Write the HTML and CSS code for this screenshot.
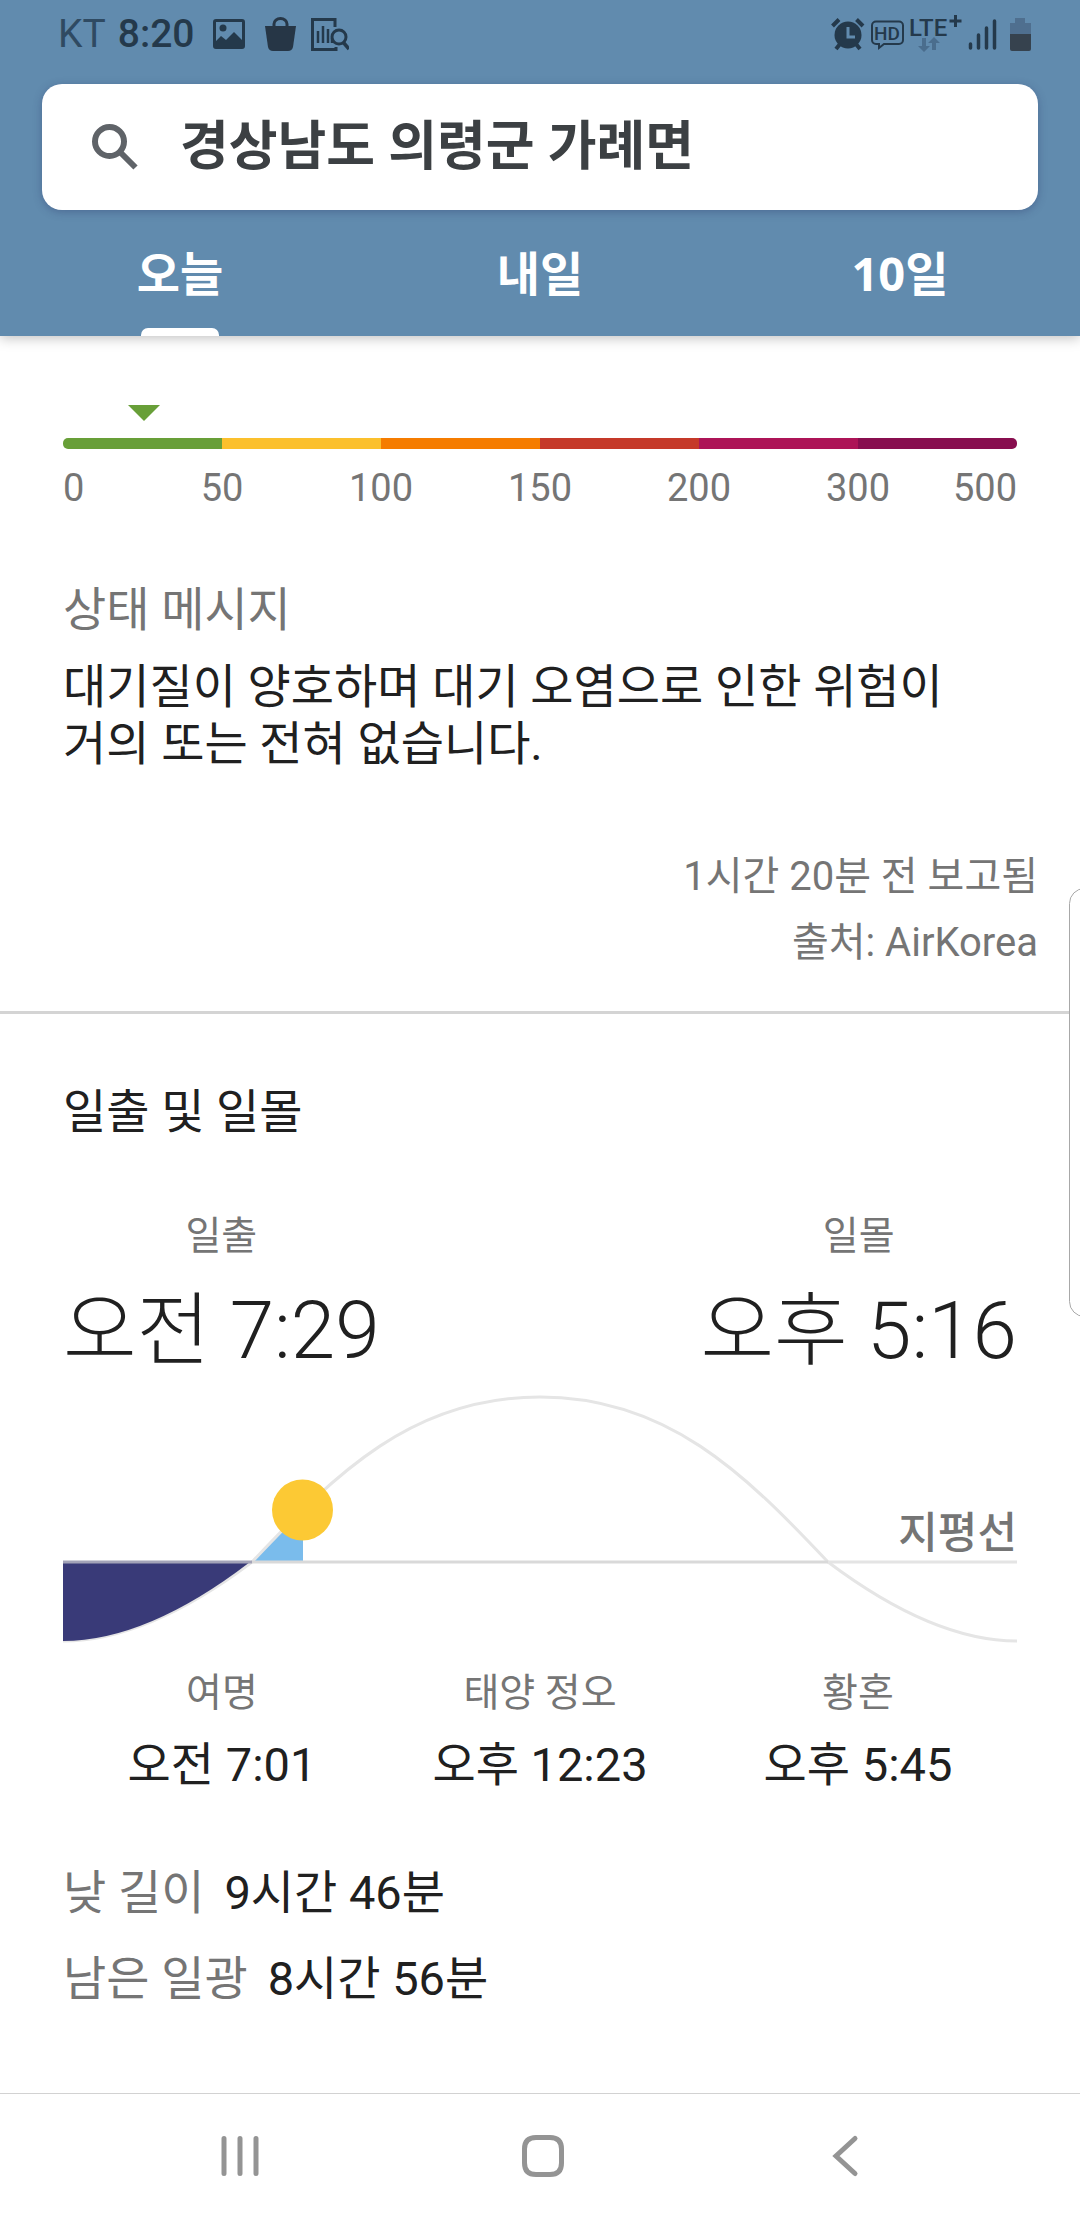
FILE: index.html
```html
<!DOCTYPE html>
<html lang="ko">
<head>
<meta charset="utf-8">
<meta name="viewport" content="width=device-width">
<title>날씨</title>
<link rel="stylesheet" href="styles.css">
</head>
<body>
<div class="app">
  <header class="header">
    <div class="status">
      <span class="carrier">KT</span>
      <span class="clock">8:20</span>
      <svg class="status-icon" width="32" height="34" viewBox="0 0 32 34" aria-hidden="true">
        <path fill="currentColor" fill-rule="evenodd" d="M3 2h26a3 3 0 0 1 3 3v24a3 3 0 0 1-3 3H3a3 3 0 0 1-3-3V5a3 3 0 0 1 3-3zm0 3v19l5-5 5 4 8-8 8 8V5z"/>
        <circle cx="10" cy="11" r="3.500" fill="currentColor"/>
      </svg>
      <svg class="status-icon bag" width="31" height="34" viewBox="0 0 31 34" aria-hidden="true">
        <path fill="currentColor" d="M0 9h31l-3 21q-1 4-5 4H8q-4 0-5-4z"/>
        <path fill="none" stroke="currentColor" stroke-width="3" d="M9 10V7a6.500 5.500 0 0 1 13 0v3"/>
      </svg>
      <svg class="status-icon chart" width="38" height="34" viewBox="0 0 38 34" aria-hidden="true">
        <g fill="none" stroke="currentColor" stroke-width="3">
          <path d="M24 10V2.500H1.500v30H25V30"/>
          <path stroke-width="2.500" d="M7 26V14M12 26V9M17 26V12M21 26v-5"/>
          <circle cx="28" cy="20" r="7"/>
          <path stroke-width="3.500" d="M32 25l6 7"/>
        </g>
      </svg>
      <svg class="status-icon system" width="202" height="42" viewBox="826 12 202 42" role="img" aria-label="알람, HD, LTE+, 신호, 배터리">
        <g fill="none" stroke="currentColor">
          <circle cx="846" cy="34" r="13.500" fill="currentColor" stroke="none"/>
          <path stroke-width="4" d="M830.500 25l6.500-6.500M861 25l-6.500-6.500M834 48l4-5M858 48l-4-5"/>
          <path stroke="#618bae" stroke-width="3" d="M846 26v10h7"/>
          <path stroke-width="2" d="M874 20.500h23a4 4 0 0 1 4 4V39a4 4 0 0 1-4 4H882l-5 4v-4h-3a4 4 0 0 1-4-4V24.500a4 4 0 0 1 4-4z"/>
          <path stroke-width="3.500" stroke-linecap="round" d="M968.500 47v-4M976.500 47V34M984.500 47V27M992.500 47V20"/>
        </g>
        <text class="hd" x="872" y="39">HD</text>
        <text class="lte" x="907" y="35">LTE</text>
        <path fill="none" stroke="currentColor" stroke-width="3" d="M953.500 14v12M947.500 20h12"/>
        <path fill="#4a6d8d" d="M920 37h4v8h4l-6 6-6-6h4zM930 49h4v-7h4l-6-6-6 6h4z"/>
        <path fill="#4f6f8f" d="M1013 17h10v5h6v11h-21V22h5z"/>
        <path fill="#36424e" d="M1008 33h21v15q0 2-2 2h-17q-2 0-2-2z"/>
      </svg>
    </div>
    <label class="search">
      <svg class="search-icon" width="46" height="46" viewBox="0 0 46 46" aria-hidden="true">
        <circle cx="17.500" cy="17.500" r="14.500"/>
        <path d="M28 28l15.500 15.500"/>
      </svg>
      <input class="search-input" type="text" value="경상남도 의령군 가례면" aria-label="위치 검색">
    </label>
    <nav class="tabs">
      <button class="tab tab-active" type="button">오늘</button>
      <button class="tab" type="button">내일</button>
      <button class="tab" type="button">10일</button>
    </nav>
  </header>

  <main class="content">
    <section class="air">
      <div class="scale">
        <div class="marker"></div>
        <div class="bar">
          <span class="seg seg-good"></span>
          <span class="seg seg-moderate"></span>
          <span class="seg seg-sensitive"></span>
          <span class="seg seg-unhealthy"></span>
          <span class="seg seg-very"></span>
          <span class="seg seg-hazard"></span>
        </div>
        <div class="ticks">
          <span class="tick tick-first">0</span>
          <span class="tick">50</span>
          <span class="tick">100</span>
          <span class="tick">150</span>
          <span class="tick">200</span>
          <span class="tick">300</span>
          <span class="tick tick-last">500</span>
        </div>
      </div>
      <h2 class="caption">상태 메시지</h2>
      <p class="message">대기질이 양호하며 대기 오염으로 인한 위험이 거의 또는 전혀 없습니다.</p>
      <div class="source">
        <p>1시간 20분 전 보고됨</p>
        <p>출처: AirKorea</p>
      </div>
    </section>

    <section class="sun">
      <h2 class="title">일출 및 일몰</h2>
      <dl class="main-times">
        <div class="time">
          <dt>일출</dt>
          <dd>오전 7:29</dd>
        </div>
        <div class="time">
          <dt>일몰</dt>
          <dd>오후 5:16</dd>
        </div>
      </dl>
      <div class="path">
        <svg class="path-chart" viewBox="0 0 954 266" aria-hidden="true">
          <path fill="#7abcec" d="M189 185Q212 160 240 133V185z"/>
          <path fill="none" stroke="#e5e5e5" stroke-width="3" d="M0 264Q84 264 189 185C273 96 350 20 477 20S681 96 765 185Q870 264 954 264"/>
          <path fill="#393a78" d="M0 185V264Q84 264 187 185z"/>
          <path stroke="#d9d9d9" stroke-width="3" d="M189 185H765"/>
          <path stroke="#e4e4e4" stroke-width="3" d="M765 185H954"/>
          <path stroke="#a3a3b8" stroke-width="3" d="M0 185H189"/>
          <circle cx="239.500" cy="133" r="30.500" fill="#fcc934"/>
        </svg>
        <span class="horizon">지평선</span>
      </div>
      <dl class="sub-times">
        <div class="time">
          <dt>여명</dt>
          <dd>오전 7:01</dd>
        </div>
        <div class="time">
          <dt>태양 정오</dt>
          <dd>오후 12:23</dd>
        </div>
        <div class="time">
          <dt>황혼</dt>
          <dd>오후 5:45</dd>
        </div>
      </dl>
      <dl class="lengths">
        <div class="length">
          <dt>낮 길이</dt>
          <dd>9시간 46분</dd>
        </div>
        <div class="length">
          <dt>남은 일광</dt>
          <dd>8시간 56분</dd>
        </div>
      </dl>
    </section>
  </main>

  <nav class="navbar">
    <button class="nav-button" type="button" aria-label="최근 앱">
      <svg width="44" height="44" viewBox="0 0 44 44"><path d="M6 4.500v35M22 4.500v35M38 4.500v35"/></svg>
    </button>
    <button class="nav-button" type="button" aria-label="홈">
      <svg width="44" height="44" viewBox="0 0 44 44"><path d="M15 3.500h14Q40.500 3.500 40.500 15v14Q40.500 40.500 29 40.500H15Q3.500 40.500 3.500 29V15Q3.500 3.500 15 3.500z"/></svg>
    </button>
    <button class="nav-button" type="button" aria-label="뒤로">
      <svg width="44" height="44" viewBox="0 0 44 44"><path d="M32 4.500L13 22l19 17.500"/></svg>
    </button>
  </nav>
  <div class="edge-handle"></div>
</div>
</body>
</html>
```

FILE: styles.css
```css
* {
  box-sizing: border-box;
  margin: 0;
  padding: 0;
}

body {
  background: #fff;
  color: #202020;
  font-family: Roboto, "Noto Sans CJK KR", sans-serif;
}

button,
input {
  border: 0;
  background: none;
  font: inherit;
  color: inherit;
}

h2 {
  font-weight: 400;
}

.app {
  position: relative;
  display: flex;
  flex-direction: column;
  min-height: 100vh;
  overflow: hidden;
}

/* Header */
.header {
  display: flex;
  flex-direction: column;
  background: #618bae;
  box-shadow: 0 2px 12px rgba(0, 0, 0, 0.25);
}

.status {
  display: flex;
  align-items: center;
  height: 68px;
  padding: 0 50px 0 58px;
  color: #24394b;
  font-size: 39px;
  line-height: 48px;
}

.carrier {
  color: #2f4a62;
}

.clock {
  margin-left: 12px;
  font-weight: 500;
}

.status-icon {
  flex: none;
  margin-left: 18px;
}

.bag {
  margin-left: 20px;
  color: #263646;
}

.chart {
  margin-left: 15px;
}

.system {
  margin-left: auto;
  overflow: visible;
}

.hd {
  fill: currentColor;
  font-size: 19px;
  font-weight: 500;
}

.lte {
  fill: currentColor;
  font-size: 24px;
  font-weight: 500;
}

.search {
  display: flex;
  align-items: center;
  gap: 42px;
  height: 126px;
  margin: 16px 42px 0;
  padding: 0 50px;
  border-radius: 20px;
  background: #fff;
  box-shadow: 0 2px 8px rgba(40, 50, 100, 0.35);
}

.search-icon {
  flex: none;
  fill: none;
  stroke: #5f6368;
  stroke-width: 6;
}

.search-input {
  flex: 1;
  min-width: 0;
  color: #3c4043;
  font-size: 53px;
  font-weight: 700;
  line-height: 64px;
  outline: 0;
}

.tabs {
  display: grid;
  grid-template-columns: repeat(3, 1fr);
}

.tab {
  position: relative;
  height: 126px;
  color: #fff;
  font-family: "Open Sans", "Noto Sans CJK KR", sans-serif;
  font-size: 47px;
  font-weight: 700;
  line-height: 56px;
}

.tab-active::after {
  content: "";
  position: absolute;
  bottom: 0;
  left: 50%;
  width: 78px;
  height: 8px;
  margin-left: -39px;
  border-radius: 7px 7px 0 0;
  background: #fff;
}

/* Air quality */
.air {
  padding: 69px 42px 35px 63px;
  border-bottom: 3px solid #d4d4d4;
}

.scale {
  margin-right: 21px;
}

.marker {
  width: 32px;
  height: 16px;
  margin-left: 65px;
  background: #689f38;
  clip-path: polygon(0 0, 100% 0, 50% 100%);
}

.bar {
  display: flex;
  height: 11px;
  margin-top: 17px;
  border-radius: 5px;
  overflow: hidden;
}

.seg {
  flex: 1;
}

.seg-good { background: #689f38; }
.seg-moderate { background: #fbc02d; }
.seg-sensitive { background: #f57c00; }
.seg-unhealthy { background: #c53929; }
.seg-very { background: #ad1457; }
.seg-hazard { background: #880e4f; }

.ticks {
  display: grid;
  grid-template-columns: repeat(12, 1fr);
  margin-top: 17px;
  color: #757575;
  font-size: 38px;
  line-height: 44px;
}

.tick {
  grid-column: span 2;
  text-align: center;
}

.tick-first {
  grid-column: span 1;
  text-align: left;
}

.tick-last {
  grid-column: span 1;
  text-align: right;
}

.caption {
  margin-top: 72px;
  color: #757575;
  font-size: 47px;
  line-height: 56px;
}

.message {
  margin: 20px 63px 0 0;
  font-size: 47px;
  line-height: 57px;
  word-break: keep-all;
}

.source {
  margin-top: 72px;
  color: #757575;
  font-size: 40px;
  line-height: 66px;
  text-align: right;
}

/* Sunrise and sunset */
.sun {
  padding: 70px 63px 85px;
}

.title {
  font-size: 47px;
  line-height: 56px;
}

.time {
  text-align: center;
}

.time dt {
  color: #757575;
  font-size: 39px;
  line-height: 48px;
}

.main-times {
  display: flex;
  justify-content: space-between;
  margin-top: 72px;
}

.main-times dd {
  margin-top: 25px;
  font-size: 80px;
  font-weight: 300;
  line-height: 92px;
}

.path {
  position: relative;
}

.path-chart {
  display: block;
  width: 100%;
}

.horizon {
  position: absolute;
  right: 0;
  bottom: 82px;
  color: #757575;
  font-size: 43px;
  font-weight: 500;
  line-height: 56px;
}

.sub-times {
  display: grid;
  grid-template-columns: repeat(3, 1fr);
  margin-top: 26px;
}

.sub-times dd {
  margin-top: 20px;
  font-size: 47px;
  line-height: 56px;
}

.lengths {
  display: grid;
  gap: 30px;
  margin-top: 72px;
}

.length {
  display: flex;
  gap: 20px;
  font-size: 47px;
  line-height: 56px;
}

.length dt {
  color: #757575;
}

/* System navigation */
.navbar {
  display: flex;
  justify-content: space-between;
  align-items: center;
  margin-top: auto;
  padding: 40px 213px 42px 218px;
  border-top: 1px solid #d2d2d2;
}

.nav-button {
  display: block;
}

.nav-button svg {
  display: block;
  fill: none;
  stroke: #949494;
  stroke-width: 5;
  stroke-linecap: round;
}

.edge-handle {
  position: absolute;
  top: 888px;
  right: -20px;
  width: 31px;
  height: 429px;
  border: 1px solid #a8a8a8;
  border-radius: 16px;
  background: #fff;
}
```
